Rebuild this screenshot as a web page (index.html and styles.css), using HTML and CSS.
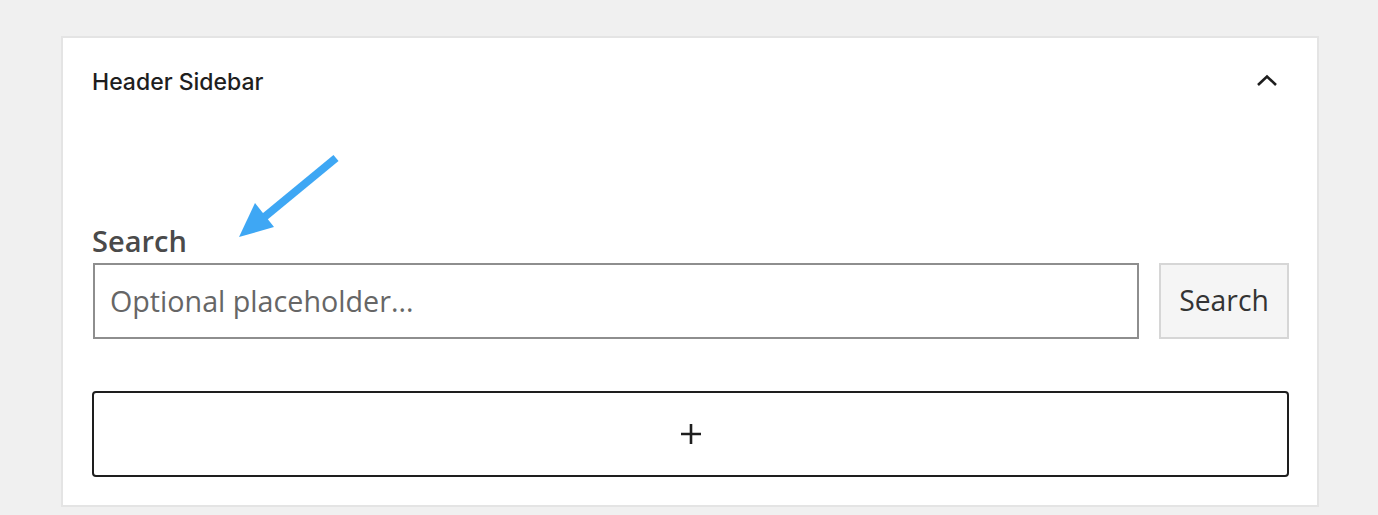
FILE: index.html
```html
<!DOCTYPE html>
<html>
<head>
<meta charset="utf-8">
<link rel="stylesheet" href="styles.css">
</head>
<body>
<div class="panel">
  <div class="panel-head">
    <span class="panel-title">Header Sidebar</span>
    <svg class="chevron" width="24" height="14" viewBox="0 0 24 14"><path d="M3 12 L12 3.5 L21 12" fill="none" stroke="#1e1e1e" stroke-width="2.6"/></svg>
  </div>
  <svg class="arrow" width="120" height="100" viewBox="0 0 120 100">
    <line x1="114" y1="5" x2="40" y2="66" stroke="#3ea7f4" stroke-width="8" stroke-linecap="butt"/>
    <polygon points="17,84 33,50 52,74" fill="#3ea7f4"/>
  </svg>
  <div class="search-block">
    <label class="search-label">Search</label>
    <div class="search-row">
      <div class="search-input"><span class="placeholder">Optional placeholder...</span></div>
      <div class="search-btn">Search</div>
    </div>
  </div>
  <div class="add-btn">
    <svg width="24" height="24" viewBox="0 0 24 24"><path d="M12 2 V22 M2 12 H22" stroke="#1e1e1e" stroke-width="2.6"/></svg>
  </div>
</div>
</body>
</html>
```

FILE: styles.css
```css
html, body {
  margin: 0;
  padding: 0;
  background: #f0f0f0;
  height: 515px;
  overflow: hidden;
}
.panel {
  position: relative;
  margin: 36px 0 0 61px;
  width: 1258px;
  height: 471px;
  box-sizing: border-box;
  background: #fff;
  border: 2px solid #e4e4e4;
  padding: 0 28px 0 29px;
}
.panel-head {
  display: flex;
  justify-content: space-between;
  align-items: center;
  height: 88px;
  padding-right: 10px;
}
.panel-title {
  font-family: Inter, "Noto Sans", sans-serif;
  font-weight: 500;
  font-size: 23px;
  color: #1e1e1e;
}
.chevron {
  margin-top: -4px;
}
.arrow {
  position: absolute;
  left: 159px;
  top: 115px;
}
.search-block {
  margin-top: 99px;
}
.search-label {
  display: block;
  font-family: "Open Sans", "Noto Sans", sans-serif;
  font-weight: 600;
  font-size: 29px;
  line-height: 31px;
  color: #4a4a4a;
  height: 38px;
}
.search-row {
  display: flex;
  gap: 20px;
  height: 76px;
}
.search-input {
  flex: 1;
  box-sizing: border-box;
  border: 2px solid #8e8e8e;
  margin-left: 1px;
  display: flex;
  align-items: center;
  padding-left: 15px;
  padding-bottom: 2px;
}
.placeholder {
  font-family: "Open Sans", "Noto Sans", sans-serif;
  font-size: 28.7px;
  color: #666;
}
.search-btn {
  width: 130px;
  box-sizing: border-box;
  background: #f5f5f5;
  border: 2px solid #d6d6d6;
  display: flex;
  align-items: center;
  justify-content: center;
  font-family: "Open Sans", "Noto Sans", sans-serif;
  font-size: 28.3px;
  color: #333;
  padding-bottom: 2px;
}
.add-btn {
  margin-top: 52px;
  height: 86px;
  box-sizing: border-box;
  border: 2px solid #1e1e1e;
  border-radius: 4px;
  display: flex;
  align-items: center;
  justify-content: center;
}
```
